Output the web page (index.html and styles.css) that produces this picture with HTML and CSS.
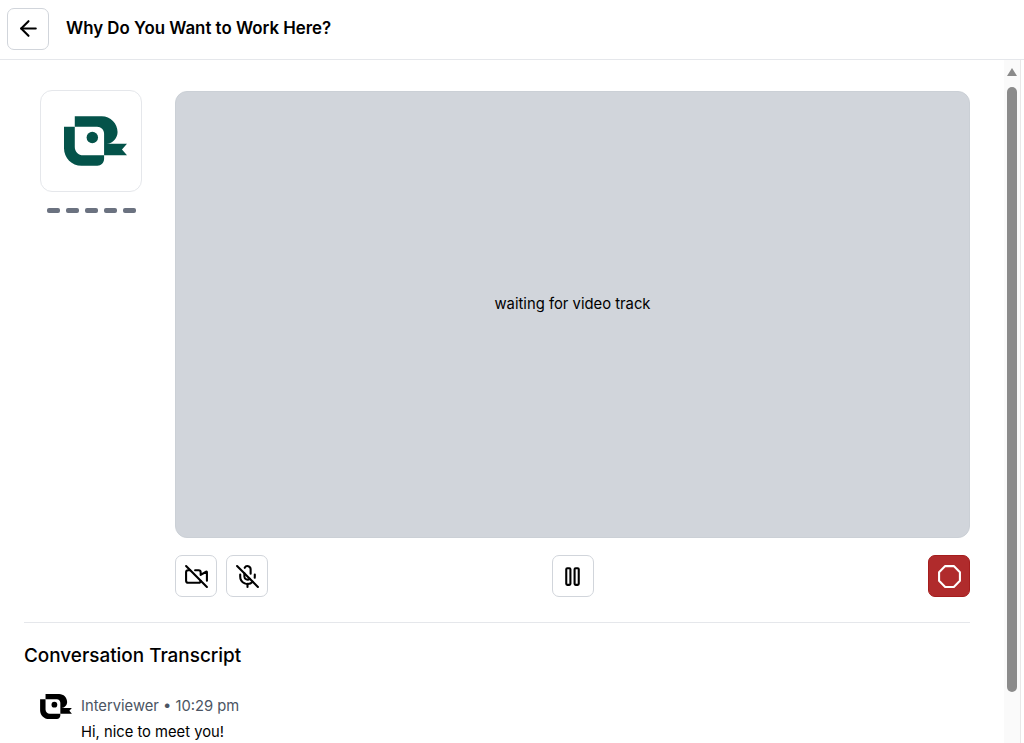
FILE: index.html
```html
<!DOCTYPE html>
<html lang="en">
<head>
    <meta charset="UTF-8">
    <meta name="viewport" content="width=device-width, initial-scale=1.0">
    <title>Why Do You Want to Work Here?</title>
    <link rel="stylesheet" href="styles.css">
</head>
<body>
    <svg class="defs" width="0" height="0">
        <symbol id="logo" viewBox="193 348 187 147">
            <path d="M225 348H305C331 348 352 369 352 395C352 412 338 430 320 430H380L365 447L380 464H312V400C312 388 303 379 291 379H225Z"/>
            <path d="M193 379H225V439C225 453 236 464 250 464H312V475C312 486 303 495 292 495H245C216 495 193 472 193 443Z"/>
            <circle cx="277" cy="411" r="17"/>
        </symbol>
    </svg>

    <header class="top-bar">
        <button class="icon-btn" type="button" aria-label="Back">
            <svg class="icon" viewBox="0 0 24 24"><path d="m12 19-7-7 7-7"/><path d="M19 12H5"/></svg>
        </button>
        <h1>Why Do You Want to Work Here?</h1>
    </header>

    <div class="content-wrap">
        <main class="content">
            <section class="stage">
                <div class="agent">
                    <div class="agent-logo">
                        <svg class="logo-large"><use href="#logo"/></svg>
                    </div>
                    <div class="dashes">
                        <span></span><span></span><span></span><span></span><span></span>
                    </div>
                </div>
                <div class="video-col">
                    <div class="video">waiting for video track</div>
                    <div class="controls">
                        <div class="controls-left">
                            <button class="icon-btn" type="button" aria-label="Camera off">
                                <svg class="icon" viewBox="0 0 24 24"><path d="M10.66 6H14a2 2 0 0 1 2 2v2.5l5.248-3.062A.5.5 0 0 1 22 7.87v8.196"/><path d="M16 16a2 2 0 0 1-2 2H4a2 2 0 0 1-2-2V8a2 2 0 0 1 2-2h2"/><path d="m2 2 20 20"/></svg>
                            </button>
                            <button class="icon-btn" type="button" aria-label="Mic off">
                                <svg class="icon" viewBox="0 0 24 24"><path d="m2 2 20 20"/><path d="M18.89 13.23A7.12 7.12 0 0 0 19 12v-2"/><path d="M5 10v2a7 7 0 0 0 12 5"/><path d="M15 9.34V5a3 3 0 0 0-5.68-1.33"/><path d="M9 9v3a3 3 0 0 0 5.12 2.12"/><path d="M12 19v3"/></svg>
                            </button>
                        </div>
                        <button class="icon-btn" type="button" aria-label="Pause">
                            <svg class="icon" viewBox="0 0 24 24"><rect x="14" y="4" width="4" height="16" rx="1"/><rect x="6" y="4" width="4" height="16" rx="1"/></svg>
                        </button>
                        <button class="icon-btn stop-btn" type="button" aria-label="End">
                            <svg class="icon" viewBox="0 0 24 24"><polygon points="7.86 2 16.14 2 22 7.86 22 16.14 16.14 22 7.86 22 2 16.14 2 7.86"/></svg>
                        </button>
                    </div>
                </div>
            </section>

            <section class="transcript">
                <h2>Conversation Transcript</h2>
                <div class="message">
                    <svg class="logo-small"><use href="#logo"/></svg>
                    <div>
                        <div class="message-meta">Interviewer • 10:29 pm</div>
                        <p>Hi, nice to meet you!</p>
                    </div>
                </div>
            </section>
        </main>

        <div class="scrollbar">
            <span class="scroll-up"></span>
            <span class="scroll-thumb"></span>
        </div>
    </div>
</body>
</html>
```

FILE: styles.css
```css
* {
    box-sizing: border-box;
}

body {
    font-family: Inter, 'Liberation Sans', sans-serif;
    background-color: #ffffff;
    color: #000000;
    margin: 0;
    height: 100vh;
    overflow: hidden;
    display: flex;
    flex-direction: column;
}

.defs {
    position: absolute;
}

.top-bar {
    height: 60px;
    flex-shrink: 0;
    padding: 0 7px;
    display: flex;
    align-items: center;
    gap: 17px;
    border-bottom: 1px solid #e5e7eb;
}

.top-bar h1 {
    margin: 0 0 4px;
    font-size: 16.85px;
    font-weight: 600;
}

.icon-btn {
    width: 42px;
    height: 42px;
    padding: 0;
    flex-shrink: 0;
    display: flex;
    align-items: center;
    justify-content: center;
    background-color: #ffffff;
    border: 1px solid #d1d5db;
    border-radius: 7px;
    color: #000000;
}

.top-bar .icon-btn {
    margin-bottom: 2px;
}

.icon {
    width: 25px;
    height: 25px;
    fill: none;
    stroke: currentColor;
    stroke-width: 2;
    stroke-linecap: round;
    stroke-linejoin: round;
}

.stop-btn {
    background-color: #b02b2c;
    border-color: #a51d1d;
    color: #ffffff;
    justify-self: end;
}

.content-wrap {
    flex: 1;
    min-height: 0;
    display: flex;
}

.content {
    width: 1004px;
    padding: 30px 34px 0 24px;
    overflow: hidden;
}

.stage {
    display: flex;
    padding-bottom: 25px;
    border-bottom: 1px solid #e5e7eb;
}

.agent {
    width: 151px;
    flex-shrink: 0;
    padding-left: 16px;
}

.agent-logo {
    width: 102px;
    height: 102px;
    padding-left: 8px;
    display: flex;
    align-items: center;
    justify-content: center;
    border: 1px solid #e5e7eb;
    border-radius: 12px;
}

.logo-large {
    width: 63px;
    height: 50px;
    fill: #04534a;
}

.dashes {
    width: 89px;
    margin: 16px 0 0 7px;
    display: flex;
    justify-content: space-between;
}

.dashes span {
    width: 13px;
    height: 4.5px;
    border-radius: 2px;
    background-color: #6b7280;
}

.video-col {
    flex: 1;
    padding-top: 1px;
}

.video {
    height: 447px;
    padding-bottom: 22px;
    display: flex;
    align-items: center;
    justify-content: center;
    font-size: 14.8px;
    background-color: #d1d5db;
    border: 1px solid #cbd0d6;
    border-radius: 12px;
}

.controls {
    margin-top: 17px;
    display: grid;
    grid-template-columns: 1fr auto 1fr;
}

.controls-left {
    width: 93px;
    display: flex;
    justify-content: space-between;
}

.transcript h2 {
    margin: 21px 0 0;
    font-size: 18.9px;
    line-height: 24px;
    font-weight: 500;
}

.message {
    margin: 19px 0 0 16px;
    display: flex;
    gap: 9px;
    font-size: 14.75px;
    line-height: 20px;
}

.logo-small {
    width: 32px;
    height: 25px;
    margin-top: 7px;
    fill: #000000;
}

.message-meta {
    margin-top: 9px;
    color: #4b5563;
}

.message p {
    margin: 6px 0 0;
}

.scrollbar {
    width: 17px;
    padding: 8px 3px 0;
    background-color: #fafafa;
    border-right: 1px solid #e8e8e8;
    display: flex;
    flex-direction: column;
    align-items: center;
}

.scroll-up {
    width: 0;
    height: 0;
    border-left: 5px solid transparent;
    border-right: 5px solid transparent;
    border-bottom: 8px solid #8a8a8a;
}

.scroll-thumb {
    width: 10px;
    height: 605px;
    margin-top: 11px;
    border-radius: 5px;
    background-color: #8b8b8b;
}
```
